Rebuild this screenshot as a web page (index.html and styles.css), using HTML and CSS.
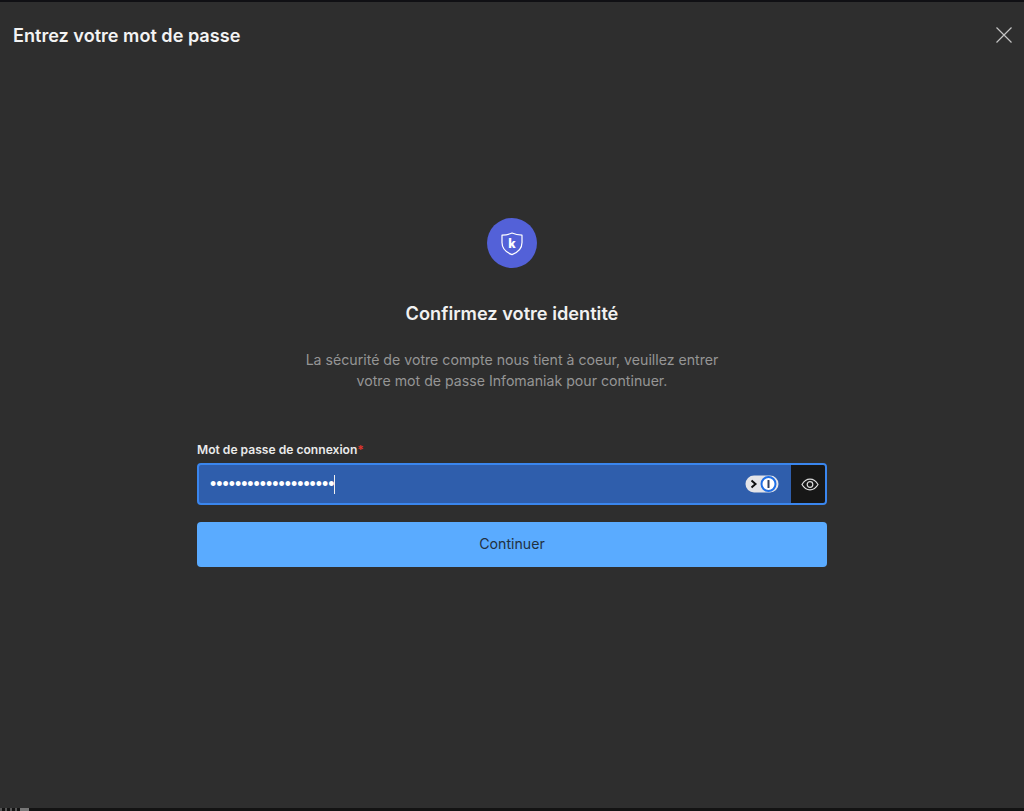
FILE: index.html
```html
<!DOCTYPE html>
<html lang="fr">
<head>
<meta charset="utf-8">
<title>Entrez votre mot de passe</title>
<link rel="stylesheet" href="styles.css">
</head>
<body>
<div class="window">
  <header class="header">
    <h1 class="title">Entrez votre mot de passe</h1>
    <button class="close" type="button" aria-label="Fermer">
      <svg width="18" height="18" viewBox="0 0 18 18" fill="none" stroke="#c4c4c4" stroke-width="1.2"><path d="M1.5 1.5 16.5 16.5M16.5 1.5 1.5 16.5"/></svg>
    </button>
  </header>
  <main class="main">
    <div class="badge">
      <svg width="24" height="25" viewBox="0 0 24 25" fill="none"><path d="M12 2C15 3.4 18.5 4.1 22 4.2V11.5C22 17 18.4 21.2 12 23.6 5.6 21.2 2 17 2 11.5V4.2C5.5 4.1 9 3.4 12 2Z" stroke="#fff" stroke-width="1.2" stroke-linejoin="round"/><text x="12" y="17.4" class="badge-k" text-anchor="middle">k</text></svg>
    </div>
    <h2 class="heading">Confirmez votre identité</h2>
    <p class="lead">La sécurité de votre compte nous tient à coeur, veuillez entrer<br>votre mot de passe Infomaniak pour continuer.</p>
    <form class="form">
      <label class="label">Mot de passe de connexion<span class="req">*</span></label>
      <div class="field">
        <div class="value"><span class="dots">••••••••••••••••••••</span><span class="caret"></span></div>
        <div class="onepass">
          <svg width="34" height="18" viewBox="0 0 34 18">
            <rect x="0.5" y="0.5" width="33" height="17" rx="8.5" fill="#e4e4e8"/>
            <path d="M6.5 5.5 10.5 9 6.5 12.5" fill="none" stroke="#111" stroke-width="2"/>
            <circle cx="23.5" cy="9" r="7" fill="#fff" stroke="#1f6fe5" stroke-width="2"/>
            <rect x="22.5" y="5" width="2" height="8" rx="0.6" fill="#33415c"/>
          </svg>
        </div>
        <button class="eye" type="button" aria-label="Afficher">
          <svg width="18" height="13" viewBox="0 0 18 13" fill="none" stroke="#dcdcdc" stroke-width="1.2"><path d="M1 6.5C3 3 5.8 1.2 9 1.2S15 3 17 6.5C15 10 12.2 11.8 9 11.8S3 10 1 6.5Z"/><circle cx="9" cy="6.5" r="2.8"/></svg>
        </button>
      </div>
      <button class="submit" type="button">Continuer</button>
    </form>
  </main>
  <div class="taskbar">
    <span class="tick"></span><span class="tick"></span><span class="tick"></span><span class="tick"></span><span class="tick wide"></span>
  </div>
</div>
</body>
</html>
```
FILE: styles.css
```css
* { box-sizing: border-box; }
html, body { margin: 0; height: 100%; }
body { background: #2e2e2e; font-family: Inter, "Liberation Sans", sans-serif; overflow: hidden; }
.window {
  height: 811px;
  display: flex;
  flex-direction: column;
  border-top: 2px solid #101014;
}
.header {
  height: 66px;
  flex: none;
  display: flex;
  align-items: center;
  justify-content: space-between;
  padding: 0 11px 0 13px;
}
.title { margin: 0; font-size: 18.1px; font-weight: 600; color: #f3f3f3; }
.close { background: none; border: 0; padding: 0; display: flex; }
.main {
  flex: 1;
  display: flex;
  flex-direction: column;
  align-items: center;
  padding-top: 150px;
}
.badge {
  width: 50px;
  height: 50px;
  border-radius: 50%;
  background: #5361d8;
  display: flex;
  align-items: center;
  justify-content: center;
}
.badge-k { font: 800 12.5px Inter, "Liberation Sans", sans-serif; fill: #fff; }
.heading { margin: 34px 0 0; font-size: 18.2px; line-height: 22px; font-weight: 600; color: #f1f1f1; }
.lead { margin: 25px 0 0; font-size: 14.15px; line-height: 21px; color: #959595; text-align: center; }
.form { width: 630px; margin-top: 51px; display: flex; flex-direction: column; }
.label { font-size: 12.1px; line-height: 16px; font-weight: 600; color: #eaeaea; }
.req { color: #e0342c; }
.field {
  margin-top: 5px;
  height: 42px;
  display: flex;
  align-items: stretch;
  border: 2px solid #3a86ee;
  border-radius: 4px;
  background: #2f5eac;
  overflow: hidden;
}
.value { flex: 1; display: flex; align-items: center; padding-left: 11px; }
.dots { font: 17.8px/1 "Liberation Sans", sans-serif; color: #fff; margin-right: -1px; padding-top: 1px; }
.caret { width: 1px; height: 19px; background: #f0f0f0; }
.onepass { display: flex; align-items: center; padding-right: 12px; }
.eye {
  width: 34px;
  border: 0;
  padding: 0 0 0 3px;
  background: #171717;
  display: flex;
  align-items: center;
  justify-content: center;
}
.submit {
  margin-top: 17px;
  height: 45px;
  border: 0;
  padding: 0 0 2px;
  border-radius: 4px;
  background: #5aabff;
  color: #22313f;
  font: 400 14.2px Inter, "Liberation Sans", sans-serif;
}
.taskbar {
  height: 3px;
  flex: none;
  background: #131313;
  display: flex;
  gap: 3px;
}
.tick { width: 2px; background: #555; }
.tick.wide { width: 9px; background: #777; }
```
